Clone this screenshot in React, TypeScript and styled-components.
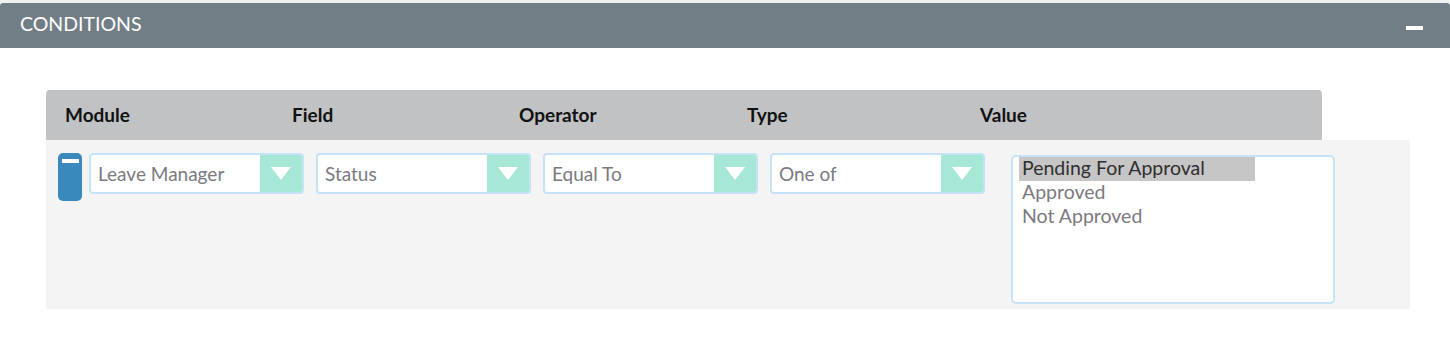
import React from "react";
import styled, { createGlobalStyle } from "styled-components";

const GlobalStyle = createGlobalStyle`
  html, body { margin: 0; padding: 0; background: #ffffff; }
  body { font-family: Lato, "Open Sans", "Liberation Sans", sans-serif; }
  * { box-sizing: border-box; }
`;

const Page = styled.div`
  width: 1450px;
  padding-top: 3px;
  background: #f1f1f1;
`;

const Panel = styled.section`
  background: #ffffff;
`;

const PanelHeader = styled.div`
  height: 45px;
  background: #717e86;
  border-radius: 3px 3px 0 0;
  display: flex;
  align-items: center;
  justify-content: space-between;
  padding: 0 27px 0 20px;
`;

const PanelTitle = styled.h2`
  margin: 0;
  font-size: 19.5px;
  font-weight: 400;
  color: #ffffff;
  line-height: 1;
  margin-top: -4px;
`;

const CollapseButton = styled.button`
  width: 17px;
  height: 4px;
  border: 0;
  padding: 0;
  margin-top: 5px;
  background: #ffffff;
  cursor: pointer;
`;

const PanelBody = styled.div`
  padding: 42px 40px 30px 46px;
`;

const HeaderRow = styled.div`
  width: 1276px;
  height: 50px;
  background: #c1c2c3;
  border-radius: 4px 4px 0 0;
  display: flex;
  align-items: center;
  padding-left: 19px;
`;

const HeaderCell = styled.div<{ $w: number }>`
  width: ${(p) => p.$w}px;
  font-size: 19px;
  font-weight: 700;
  color: #111111;
  margin-top: -1px;
`;

const ConditionRow = styled.div`
  width: 1364px;
  height: 169px;
  background: #f4f4f4;
  display: flex;
  align-items: flex-start;
  padding: 13px 0 0 12px;
`;

const RemoveButton = styled.button`
  width: 24px;
  height: 48px;
  border: 0;
  border-radius: 5px;
  background: #3a89bd;
  padding: 6px 0 0 0;
  display: flex;
  justify-content: center;
  align-items: flex-start;
  margin-right: 7px;
  cursor: pointer;
  &::before {
    content: "";
    width: 17px;
    height: 4px;
    background: #ffffff;
  }
`;

const SelectBox = styled.div`
  width: 215px;
  height: 41px;
  border: 2px solid #c4e3f6;
  border-radius: 4px;
  background: #ffffff;
  display: flex;
  overflow: hidden;
  margin-right: 12px;
`;

const SelectValue = styled.div`
  flex: 1;
  display: flex;
  align-items: center;
  padding: 0 0 1px 7px;
  font-size: 19px;
  color: #7a7a80;
  white-space: nowrap;
  overflow: hidden;
`;

const SelectArrow = styled.div`
  width: 42px;
  background: #a6e7d5;
  display: flex;
  align-items: center;
  justify-content: center;
`;

const ListBox = styled.div`
  width: 324px;
  height: 149px;
  margin-left: 14px;
  margin-top: 2px;
  border: 2px solid #c4e3f6;
  border-radius: 5px;
  background: #ffffff;
  padding: 0 0 0 6px;
`;

const ListOption = styled.div<{ $selected?: boolean }>`
  width: 236px;
  height: 24px;
  line-height: 22px;
  font-size: 19.5px;
  padding-left: 3px;
  color: ${(p) => (p.$selected ? "#2f2f2f" : "#7a7a80")};
  background: ${(p) => (p.$selected ? "#c6c6c6" : "transparent")};
  white-space: nowrap;
`;

const Arrow = () => (
  <svg width="20" height="13" viewBox="0 0 20 13">
    <polygon points="0,0 20,0 10,13" fill="#ffffff" />
  </svg>
);

const Select = ({ value }: { value: string }) => (
  <SelectBox>
    <SelectValue>{value}</SelectValue>
    <SelectArrow>
      <Arrow />
    </SelectArrow>
  </SelectBox>
);

const columns = [
  { label: "Module", w: 227 },
  { label: "Field", w: 227 },
  { label: "Operator", w: 228 },
  { label: "Type", w: 233 },
  { label: "Value", w: 200 },
];

export default function App() {
  return (
    <>
      <GlobalStyle />
      <Page>
        <Panel>
          <PanelHeader>
            <PanelTitle>CONDITIONS</PanelTitle>
            <CollapseButton aria-label="collapse" />
          </PanelHeader>
          <PanelBody>
            <HeaderRow>
              {columns.map((c) => (
                <HeaderCell key={c.label} $w={c.w}>
                  {c.label}
                </HeaderCell>
              ))}
            </HeaderRow>
            <ConditionRow>
              <RemoveButton aria-label="remove" />
              <Select value="Leave Manager" />
              <Select value="Status" />
              <Select value="Equal To" />
              <Select value="One of" />
              <ListBox>
                <ListOption $selected>Pending For Approval</ListOption>
                <ListOption>Approved</ListOption>
                <ListOption>Not Approved</ListOption>
              </ListBox>
            </ConditionRow>
          </PanelBody>
        </Panel>
      </Page>
    </>
  );
}
